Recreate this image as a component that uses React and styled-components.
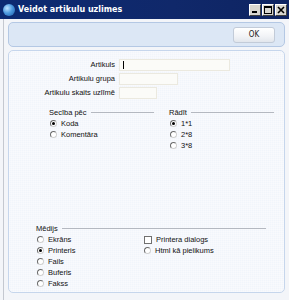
import React from 'react';
import styled, { createGlobalStyle } from 'styled-components';

const GlobalStyle = createGlobalStyle`
  html, body { margin: 0; padding: 0; background: #ffffff; }
  body { font-family: "Liberation Sans", Arial, sans-serif; }
`;

const Window = styled.div`
  width: 289px;
  height: 300px;
  display: flex;
  flex-direction: column;
  background: #f3f5f9;
  overflow: hidden;
`;

const TitleBar = styled.div`
  height: 19px;
  flex-shrink: 0;
  display: flex;
  align-items: center;
  padding: 0 2px 0 3px;
  background: linear-gradient(to right, #0c2a72 0%, #10286a 60%, #0e2462 100%);
  color: #ffffff;
`;

const AppIcon = styled.div`
  width: 12px;
  height: 12px;
  border-radius: 50%;
  background: radial-gradient(circle at 35% 35%, #bfe3ff 0%, #4d9be0 45%, #1a5aa8 100%);
  margin-right: 3px;
`;

const Title = styled.div`
  flex: 1;
  font-family: "DejaVu Sans", Verdana, sans-serif;
  font-weight: bold;
  font-size: 8px;
`;

const Caption = styled.div`
  display: flex;
`;

const CaptionBtn = styled.div`
  width: 12px;
  height: 12px;
  margin-left: 1px;
  background: #d8d6d0;
  border: 1px solid;
  border-color: #ffffff #404040 #404040 #ffffff;
  box-sizing: border-box;
  display: flex;
  align-items: center;
  justify-content: center;
`;

const Body = styled.div`
  flex: 1;
  display: flex;
  flex-direction: column;
  gap: 3px;
  padding: 3px 4px 7px 4px;
  margin-left: 3px;
  border-left: 1px solid #c4c8d0;
`;

const Toolbar = styled.div`
  height: 25px;
  flex-shrink: 0;
  display: flex;
  align-items: center;
  justify-content: flex-end;
  padding-right: 9px;
  background: #dce7f5;
  border: 1px solid #b4c8e4;
  border-radius: 5px;
  box-sizing: border-box;
`;

const OkButton = styled.div`
  width: 42px;
  height: 16px;
  box-sizing: border-box;
  border: 1px solid #c2cbd8;
  border-radius: 3px;
  background: linear-gradient(to bottom, #ffffff 0%, #f1f3f6 60%, #e2e6ec 100%);
  display: flex;
  align-items: center;
  justify-content: center;
  font-family: "DejaVu Sans Condensed", "DejaVu Sans", sans-serif;
  font-size: 8px;
  color: #222;
`;

const Panel = styled.div`
  flex: 1;
  display: flex;
  flex-direction: column;
  background-color: #f1f5fb;
  background-image: linear-gradient(rgba(255,255,255,0.35) 1px, transparent 1px),
    linear-gradient(90deg, rgba(255,255,255,0.35) 1px, transparent 1px);
  background-size: 2px 2px;
  border: 1px solid #c6d6ec;
  border-radius: 5px;
  box-sizing: border-box;
  padding: 8px 0 3px 0;
  font-size: 7.5px;
  color: #111;
`;

const Fields = styled.div`
  display: grid;
  grid-template-columns: 106px auto;
  column-gap: 4px;
  row-gap: 2px;
  align-items: center;
`;

const FieldLabel = styled.div`
  text-align: right;
  line-height: 12px;
`;

const Input = styled.div`
  width: ${p => p.$w}px;
  height: 12px;
  box-sizing: border-box;
  background: #fbfbf8;
  border: 1px solid #ebe9df;
  display: flex;
  align-items: center;
  padding-left: 3px;
`;

const Caret = styled.div`
  width: 1px;
  height: 8px;
  background: #000;
`;

const Groups = styled.div`
  display: grid;
  grid-template-columns: 105px 105px;
  column-gap: 15px;
  margin: 9px 0 0 40px;
`;

const Group = styled.div`
  display: flex;
  flex-direction: column;
`;

const GroupHead = styled.div`
  display: flex;
  align-items: center;
  gap: 4px;
  height: 9px;
  margin-bottom: 1px;
  &::after {
    content: "";
    flex: 1;
    height: 1px;
    background: #b4b8c0;
  }
`;

const Option = styled.div`
  display: flex;
  align-items: center;
  height: 11px;
  gap: 4px;
  padding-left: 1px;
`;

const Radio = styled.span`
  width: 7px;
  height: 7px;
  border-radius: 50%;
  box-sizing: border-box;
  border: 1px solid #6a6a6a;
  border-right-color: #d0d0d0;
  border-bottom-color: #d0d0d0;
  background: #fff;
  display: flex;
  align-items: center;
  justify-content: center;
  &::after {
    content: "";
    width: 3px;
    height: 3px;
    border-radius: 50%;
    background: ${p => (p.$on ? '#000' : 'transparent')};
  }
`;

const Check = styled.span`
  width: 8px;
  height: 8px;
  box-sizing: border-box;
  border: 1px solid #707070;
  background: #fff;
`;

const Media = styled.div`
  margin: auto 0 0 27px;
  width: 230px;
  display: flex;
  flex-direction: column;
`;

const MediaCols = styled.div`
  display: grid;
  grid-template-columns: 107px auto;
`;

const Minus = () => (
  <svg width="8" height="8" viewBox="0 0 8 8"><rect x="1" y="5" width="5" height="2" fill="#000" /></svg>
);
const Maxi = () => (
  <svg width="8" height="8" viewBox="0 0 8 8"><rect x="0.5" y="0.5" width="7" height="7" fill="none" stroke="#000" /><rect x="0" y="0" width="8" height="2" fill="#000" /></svg>
);
const Close = () => (
  <svg width="8" height="8" viewBox="0 0 8 8"><path d="M1 1 L7 7 M7 1 L1 7" stroke="#000" strokeWidth="1.6" /></svg>
);

const RadioOpt = ({ on, children }) => (
  <Option><Radio $on={on} />{children}</Option>
);

export default function App() {
  return (
    <>
      <GlobalStyle />
      <Window>
        <TitleBar>
          <AppIcon />
          <Title>Veidot artikulu uzlimes</Title>
          <Caption>
            <CaptionBtn><Minus /></CaptionBtn>
            <CaptionBtn><Maxi /></CaptionBtn>
            <CaptionBtn><Close /></CaptionBtn>
          </Caption>
        </TitleBar>
        <Body>
          <Toolbar>
            <OkButton>OK</OkButton>
          </Toolbar>
          <Panel>
            <Fields>
              <FieldLabel>Artikuls</FieldLabel>
              <Input $w={111}><Caret /></Input>
              <FieldLabel>Artikulu grupa</FieldLabel>
              <Input $w={59} />
              <FieldLabel>Artikulu skaits uzlīmē</FieldLabel>
              <Input $w={38} />
            </Fields>
            <Groups>
              <Group>
                <GroupHead>Secība pēc</GroupHead>
                <RadioOpt on>Koda</RadioOpt>
                <RadioOpt>Komentāra</RadioOpt>
              </Group>
              <Group>
                <GroupHead>Rādīt</GroupHead>
                <RadioOpt on>1*1</RadioOpt>
                <RadioOpt>2*8</RadioOpt>
                <RadioOpt>3*8</RadioOpt>
              </Group>
            </Groups>
            <Media>
              <GroupHead>Mēdijs</GroupHead>
              <MediaCols>
                <Group>
                  <RadioOpt>Ekrāns</RadioOpt>
                  <RadioOpt on>Printeris</RadioOpt>
                  <RadioOpt>Fails</RadioOpt>
                  <RadioOpt>Buferis</RadioOpt>
                  <RadioOpt>Fakss</RadioOpt>
                </Group>
                <Group>
                  <Option><Check />Printera dialogs</Option>
                  <RadioOpt>Html kā pielikums</RadioOpt>
                </Group>
              </MediaCols>
            </Media>
          </Panel>
        </Body>
      </Window>
    </>
  );
}
